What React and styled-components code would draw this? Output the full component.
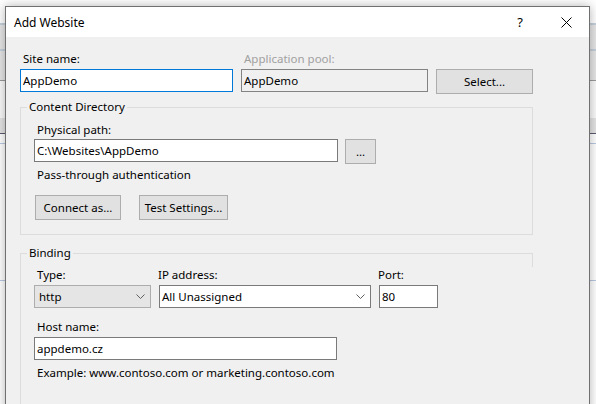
import React from "react";
import styled, { createGlobalStyle } from "styled-components";

const GlobalStyle = createGlobalStyle`
  html, body { margin: 0; padding: 0; }
  body {
    width: 596px;
    height: 404px;
    overflow: hidden;
    font-family: "Noto Sans", "Open Sans", sans-serif;
    font-size: 11.5px;
    color: #000;
  }
  * { box-sizing: border-box; }
`;

const Desktop = styled.div`
  position: relative;
  width: 596px;
  height: 404px;
  overflow: hidden;
  background: linear-gradient(
    to bottom,
    #ffffff 0 23px,
    #c5d0dc 23px 25px,
    #e6e6e6 25px 49px,
    #c5d0dc 49px 51px,
    #e6e6e6 51px 80px,
    #9a9a9a 80px 81px,
    #fafafa 81px 118px,
    #e4e4e4 118px 133px,
    #5a5a70 133px 134px,
    #ffffff 134px 143px,
    #b8c8e0 143px 144px,
    #ffffff 144px 280px,
    #b8c8e0 280px 281px,
    #ffffff 281px
  );
`;

const Dialog = styled.div`
  position: absolute;
  left: 5px;
  top: 6px;
  width: 585px;
  height: 430px;
  border: 1px solid #707070;
  background: #f0f0f0;
  box-shadow: 0 0 10px rgba(0, 0, 0, 0.3);
  display: flex;
  flex-direction: column;
`;

const TitleBar = styled.div`
  height: 30px;
  background: #fff;
  display: flex;
  align-items: center;
  padding-left: 8px;
  flex-shrink: 0;
`;

const Title = styled.div`
  flex: 1;
  font-size: 12px;
`;

const TitleButton = styled.div`
  width: 46px;
  height: 30px;
  display: flex;
  align-items: center;
  justify-content: center;
  font-size: 13px;
`;

const Body = styled.div`
  padding: 14px 0 0 14px;
  display: flex;
  flex-direction: column;
`;

const TopGrid = styled.div`
  display: grid;
  grid-template-columns: 213px 187px 97px;
  column-gap: 8px;
  row-gap: 2px;
  align-items: start;
`;

const Label = styled.div`
  line-height: 16px;
  height: 16px;
  margin-left: ${(p) => (p.$indent === undefined ? 3 : p.$indent)}px;
  white-space: nowrap;
  color: ${(p) => (p.$disabled ? "#a0a0a0" : "#000")};
`;

const TextBox = styled.div`
  height: 23px;
  width: ${(p) => (p.$width ? `${p.$width}px` : "auto")};
  border: 1px solid ${(p) => (p.$focused ? "#0078d7" : p.$disabled ? "#838383" : "#7a7a7a")};
  background: ${(p) => (p.$disabled ? "#f0f0f0" : "#fff")};
  padding: 0 2px;
  display: flex;
  align-items: center;
  white-space: nowrap;
`;

const Button = styled.div`
  height: 25px;
  width: ${(p) => p.$width}px;
  border: 1px solid #adadad;
  background: #e1e1e1;
  display: flex;
  align-items: center;
  justify-content: center;
  white-space: nowrap;
`;

const Group = styled.div`
  position: relative;
  width: 513px;
  margin-top: ${(p) => p.$top}px;
  border: 1px solid #dcdcdc;
  ${(p) => (p.$open ? "border-right: none; border-bottom: none;" : "")}
  padding: ${(p) => p.$pad};
  display: flex;
  flex-direction: column;

  &::after {
    content: "";
    display: ${(p) => (p.$open ? "block" : "none")};
    position: absolute;
    right: 0;
    top: -1px;
    width: 1px;
    height: 14px;
    background: #dcdcdc;
  }
`;

const Legend = styled.div`
  position: absolute;
  top: -9px;
  left: 6px;
  padding: 0 2px;
  line-height: 16px;
  background: #f0f0f0;
`;

const Row = styled.div`
  display: flex;
  align-items: flex-start;
  gap: ${(p) => p.$gap}px;
  margin-top: ${(p) => p.$top || 0}px;
  margin-left: ${(p) => p.$left || 0}px;
`;

const Note = styled.div`
  line-height: 16px;
  margin-left: 3px;
  margin-top: ${(p) => p.$top}px;
  white-space: nowrap;
`;

const BindGrid = styled.div`
  display: grid;
  grid-template-columns: 117px 212px 59px;
  column-gap: 8px;
  row-gap: 2px;
`;

const Combo = styled.div`
  height: 23px;
  border: 1px solid ${(p) => (p.$flat ? "#adadad" : "#7a7a7a")};
  background: ${(p) => (p.$flat ? "#e5e5e5" : "#fff")};
  display: flex;
  align-items: center;
  justify-content: space-between;
  padding: 0 5px 0 ${(p) => (p.$flat ? 4 : 2)}px;
  white-space: nowrap;
`;

const Field = styled.div`
  display: flex;
  flex-direction: column;
  gap: 2px;
  margin-top: ${(p) => p.$top || 0}px;
`;

const Chevron = () => (
  <svg width="9" height="5" viewBox="0 0 9 5">
    <polyline points="0.5,0.5 4.5,4.5 8.5,0.5" fill="none" stroke="#606060" strokeWidth="1" />
  </svg>
);

const CloseIcon = () => (
  <svg width="11" height="11" viewBox="0 0 11 11">
    <path d="M0.5 0.5 L10.5 10.5 M10.5 0.5 L0.5 10.5" stroke="#000" strokeWidth="1" />
  </svg>
);

export default function App() {
  return (
    <Desktop>
      <GlobalStyle />
      <Dialog>
        <TitleBar>
          <Title>Add Website</Title>
          <TitleButton>?</TitleButton>
          <TitleButton>
            <CloseIcon />
          </TitleButton>
        </TitleBar>
        <Body>
          <TopGrid>
            <Label>Site name:</Label>
            <Label $disabled>Application pool:</Label>
            <div />
            <TextBox $focused>AppDemo</TextBox>
            <TextBox $disabled>AppDemo</TextBox>
            <Button $width={97}>Select...</Button>
          </TopGrid>

          <Group $top={13} $pad="14px 0 14px 13px">
            <Legend>Content Directory</Legend>
            <Label>Physical path:</Label>
            <Row $gap={7} $top={1}>
              <TextBox $width={304}>C:\Websites\AppDemo</TextBox>
              <Button $width={31}>...</Button>
            </Row>
            <Note $top={3}>Pass-through authentication</Note>
            <Row $gap={18} $top={12} $left={1}>
              <Button $width={86}>Connect as...</Button>
              <Button $width={89}>Test Settings...</Button>
            </Row>
          </Group>

          <Group $top={18} $pad="13px 0 40px 13px" $open>
            <Legend>Binding</Legend>
            <BindGrid>
              <Label>Type:</Label>
              <Label $indent={-1}>IP address:</Label>
              <Label $indent={-1}>Port:</Label>
              <Combo $flat>
                <span>http</span>
                <Chevron />
              </Combo>
              <Combo>
                <span>All Unassigned</span>
                <Chevron />
              </Combo>
              <TextBox>80</TextBox>
            </BindGrid>
            <Field $top={11}>
              <Label>Host name:</Label>
              <TextBox $width={303}>appdemo.cz</TextBox>
            </Field>
            <Note $top={5}>Example: www.contoso.com or marketing.contoso.com</Note>
          </Group>
        </Body>
      </Dialog>
    </Desktop>
  );
}
